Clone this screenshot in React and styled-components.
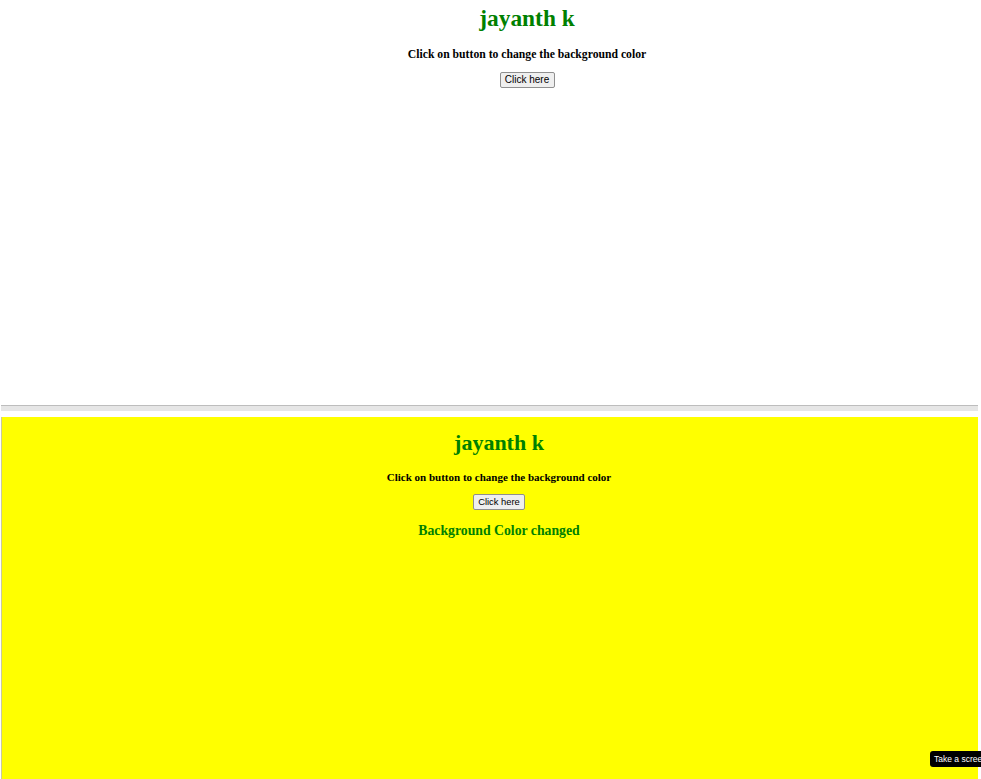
import React from "react";
import styled, { createGlobalStyle } from "styled-components";

const Global = createGlobalStyle`
  html, body { margin: 0; padding: 0; background: #ffffff; overflow: hidden; }
  #root { width: 981px; height: 779px; }
`;

const Screen = styled.div`
  position: relative;
  width: 981px;
  height: 779px;
  overflow: hidden;
  background: #ffffff;
  display: flex;
  flex-direction: column;
`;

const TopPane = styled.div`
  width: 979px;
  height: 405px;
  overflow: hidden;
  background: #ffffff;
`;

const Doc = styled.div`
  width: ${(p) => p.$w}px;
  display: flex;
  flex-direction: column;
  align-items: center;
  font-family: "Liberation Serif", "Times New Roman", serif;
`;

const Title = styled.h1`
  margin: ${(p) => p.$mt}px 0 0;
  font-size: ${(p) => p.$size}px;
  line-height: ${(p) => p.$lh}px;
  font-weight: bold;
  color: #008000;
`;

const Sub = styled.h4`
  margin: ${(p) => p.$mt}px 0 0;
  font-size: ${(p) => p.$size}px;
  line-height: ${(p) => p.$lh}px;
  font-weight: bold;
  color: #000000;
`;

const Note = styled.h3`
  margin: ${(p) => p.$mt}px 0 0;
  font-size: ${(p) => p.$size}px;
  line-height: ${(p) => p.$lh}px;
  font-weight: bold;
  color: #008000;
`;

const Button = styled.button`
  margin: ${(p) => p.$mt}px 0 0;
  height: ${(p) => p.$h}px;
  width: ${(p) => p.$w}px;
  padding: 0;
  font-family: "Liberation Sans", Arial, sans-serif;
  font-size: ${(p) => p.$size}px;
  line-height: 1;
  color: #000000;
  background: #efefef;
  border: 1px solid #8f8f8f;
  border-radius: 2px;
  box-sizing: border-box;
`;

const Divider = styled.div`
  margin-left: 1px;
  width: 977px;
  height: 12px;
  box-sizing: border-box;
  border-top: 1px solid #bdbdbd;
  background: linear-gradient(#e6e6e6 0, #e6e6e6 5px, #ffffff 5px, #ffffff 100%);
`;

const BottomPane = styled.div`
  margin-left: 1px;
  width: 977px;
  flex: 1;
  overflow: hidden;
  background: #ffff00;
  border-left: 1px solid #c8c8a0;
  box-sizing: border-box;
`;

const Tooltip = styled.div`
  position: absolute;
  left: 930px;
  top: 751px;
  height: 16px;
  padding: 0 5px 0 4px;
  background: #000000;
  border-radius: 3px;
  color: #ffffff;
  font-family: "Liberation Sans", Arial, sans-serif;
  font-size: 8.5px;
  line-height: 16px;
  white-space: nowrap;
`;

export default function App() {
  return (
    <>
      <Global />
      <Screen>
        <TopPane>
          <Doc $w={1054}>
            <Title $mt={5} $size={23.4} $lh={27}>jayanth k</Title>
            <Sub $mt={16} $size={11.7} $lh={14}>
              Click on button to change the background color
            </Sub>
            <Button $mt={10} $h={16} $w={55} $size={10}>Click here</Button>
          </Doc>
        </TopPane>
        <Divider />
        <BottomPane>
          <Doc $w={994}>
            <Title $mt={13} $size={22} $lh={25}>jayanth k</Title>
            <Sub $mt={16} $size={11} $lh={13}>
              Click on button to change the background color
            </Sub>
            <Button $mt={10} $h={16} $w={52} $size={9.4}>Click here</Button>
            <Note $mt={13} $size={13.75} $lh={16}>Background Color changed</Note>
          </Doc>
        </BottomPane>
        <Tooltip>Take a screenshot</Tooltip>
      </Screen>
    </>
  );
}
